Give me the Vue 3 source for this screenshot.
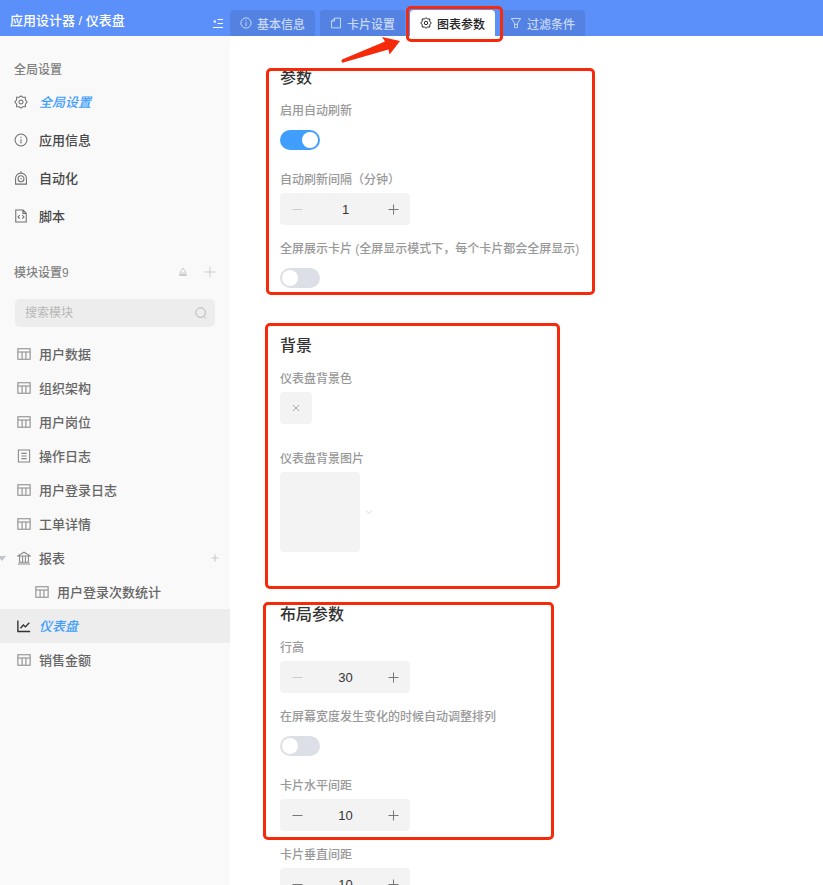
<!-- DashboardDesigner.vue -->
<script setup>
import { ref, reactive } from "vue";

const tabs = [
  { key: "base", label: "基本信息", icon: "info" },
  { key: "card", label: "卡片设置", icon: "card" },
  { key: "chart", label: "图表参数", icon: "gear" },
  { key: "filter", label: "过滤条件", icon: "filter" },
];
const activeTab = ref("chart");

const globalItems = [
  { label: "全局设置", icon: "gear", active: true },
  { label: "应用信息", icon: "info" },
  { label: "自动化", icon: "robot" },
  { label: "脚本", icon: "script" },
];

const modules = [
  { label: "用户数据", icon: "table" },
  { label: "组织架构", icon: "table" },
  { label: "用户岗位", icon: "table" },
  { label: "操作日志", icon: "log" },
  { label: "用户登录日志", icon: "table" },
  { label: "工单详情", icon: "table" },
  { label: "报表", icon: "bank", group: true },
  { label: "用户登录次数统计", icon: "table", child: true },
  { label: "仪表盘", icon: "chart", active: true },
  { label: "销售金额", icon: "table" },
];

// stroke paths, 16 x 16 grid
const icons = {
  info: "M8 1.2a6.8 6.8 0 1 0 0 13.6a6.8 6.8 0 1 0 0-13.6zM8 7v5M8 4.2v1.4",
  gear: "M8 1l2 1.6h3v3L15 8l-2 2.4v3h-3L8 15l-2-1.6H3v-3L1 8l2-2.4v-3h3zM8 5.7a2.3 2.3 0 1 0 0 4.6a2.3 2.3 0 1 0 0-4.6z",
  card: "M6 1.5h8v13H2v-9zM6 1.5v4H2",
  filter: "M1.8 2h12.4L10 8.2v6H6v-6zM6 9.8h4",
  robot: "M1.8 15V8.6a6.2 6.2 0 0 1 12.4 0V15zM8 2.4V.2M8 5.4a3.4 3.4 0 1 0 0 6.8a3.4 3.4 0 1 0 0-6.8zM8 8v1.6",
  script: "M2 1.2h8.4L14 4.8v10H2zM10.2 1.2V5H14M6.6 7l-2 2 2 2M9.4 7l2 2-2 2",
  table: "M1 2h14v12H1zM1 5.6h14M5.8 5.6V14M10.2 5.6V14",
  log: "M1.6 1.2h12.8v13.6H1.6zM5 5h6M5 8h6M5 11h6",
  bank: "M1 5.6l7-4.2 7 4.2zM1 14.8h14M2 12.8h12M3 5.6v7M6.4 5.6v7M9.6 5.6v7M13 5.6v7",
  chart: "M1 1.6v12.6h14M4 10.6l3.2-3.8 2.4 2.2L14 4.2",
};

const form = reactive({
  autoRefresh: true,
  interval: 1,
  fullscreen: false,
  rowHeight: 30,
  responsive: false,
  gapX: 10,
  gapY: 10,
});

const sections = [
  {
    title: "参数",
    mark: "mark-params",
    fields: [
      { key: "autoRefresh", label: "启用自动刷新", type: "switch" },
      { key: "interval", label: "自动刷新间隔（分钟）", type: "number", min: 1 },
      {
        key: "fullscreen",
        label: "全屏展示卡片 (全屏显示模式下，每个卡片都会全屏显示)",
        type: "switch",
      },
    ],
  },
  {
    title: "背景",
    mark: "mark-background",
    loose: true,
    fields: [
      { key: "bgColor", label: "仪表盘背景色", type: "color" },
      { key: "bgImage", label: "仪表盘背景图片", type: "image" },
    ],
  },
  {
    title: "布局参数",
    mark: "mark-layout",
    fields: [
      { key: "rowHeight", label: "行高", type: "number", min: 30 },
      { key: "responsive", label: "在屏幕宽度发生变化的时候自动调整排列", type: "switch" },
      { key: "gapX", label: "卡片水平间距", type: "number", min: 0 },
      { key: "gapY", label: "卡片垂直间距", type: "number", min: 0 },
    ],
  },
];

function step(field, delta) {
  form[field.key] = Math.max(field.min, Number(form[field.key]) + delta);
}
</script>

<template>
  <div class="designer">
    <header class="topbar">
      <div class="brand">
        <span>应用设计器 / 仪表盘</span>
        <button class="icon-btn" type="button" aria-label="收起">
          <svg width="12" height="12" viewBox="0 0 12 12">
            <path d="M5.5 2.5H11M5.5 6.5H11M1 10.5h10" />
            <path class="solid" d="M1 4.5l2.6-1.8v3.6z" />
          </svg>
        </button>
      </div>
      <nav class="tabs">
        <div v-for="tab in tabs" :key="tab.key" class="tab-wrap">
          <button
            type="button"
            class="tab"
            :class="{ active: tab.key === activeTab }"
            @click="activeTab = tab.key"
          >
            <svg width="12" height="12" viewBox="0 0 16 16"><path :d="icons[tab.icon]" /></svg>
            <span>{{ tab.label }}</span>
          </button>
          <template v-if="tab.key === 'chart'">
            <span class="mark mark-tab"></span>
            <svg class="arrow" width="62" height="30" viewBox="0 0 62 30">
              <path d="M60 5L42 1l3 4.6-43 18q-1.4 1.8 .4 3.2l46-13.4 1.2 5z" />
            </svg>
          </template>
        </div>
      </nav>
    </header>

    <div class="body">
      <aside class="sidebar">
        <div class="side-title global-title"><span>全局设置</span></div>
        <nav>
          <a
            v-for="item in globalItems"
            :key="item.label"
            href="#"
            class="global-item"
            :class="{ active: item.active }"
          >
            <svg width="14" height="14" viewBox="0 0 16 16"><path :d="icons[item.icon]" /></svg>
            <span>{{ item.label }}</span>
          </a>
        </nav>

        <div class="side-title module-title">
          <span>模块设置9</span>
          <button class="icon-btn" type="button" aria-label="收起全部">
            <svg width="8" height="10" viewBox="0 0 8 10">
              <path d="M4 1L.8 6h6.4z" />
              <path class="solid" d="M.2 7h7.6v2H.2z" />
            </svg>
          </button>
          <button class="icon-btn" type="button" aria-label="新增模块">
            <svg width="12" height="12" viewBox="0 0 12 12"><path d="M6 .5v11M.5 6h11" /></svg>
          </button>
        </div>

        <label class="search">
          <input type="text" placeholder="搜索模块" aria-label="搜索模块" />
          <svg width="12" height="12" viewBox="0 0 12 12">
            <circle cx="5.6" cy="5.6" r="4.8" />
            <path d="M9 9.4l2 2" />
          </svg>
        </label>

        <nav>
          <a
            v-for="item in modules"
            :key="item.label"
            href="#"
            class="module-item"
            :class="{ active: item.active, child: item.child }"
          >
            <i v-if="item.group" class="caret"></i>
            <svg width="14" height="14" viewBox="0 0 16 16"><path :d="icons[item.icon]" /></svg>
            <span>{{ item.label }}</span>
            <svg v-if="item.group" class="add" width="8" height="8" viewBox="0 0 8 8">
              <path d="M4 .5v7M.5 4h7" />
            </svg>
          </a>
        </nav>
      </aside>

      <main class="content">
        <section
          v-for="section in sections"
          :key="section.title"
          class="section"
          :class="{ loose: section.loose }"
        >
          <h2>{{ section.title }}</h2>
          <div v-for="field in section.fields" :key="field.key" class="field">
            <label :for="field.key">{{ field.label }}</label>

            <div v-if="field.type === 'switch'" class="control">
              <input :id="field.key" v-model="form[field.key]" class="switch" type="checkbox" />
            </div>

            <div v-else-if="field.type === 'number'" class="stepper">
              <button
                type="button"
                aria-label="减少"
                :disabled="form[field.key] <= field.min"
                @click="step(field, -1)"
              >
                <svg width="11" height="11" viewBox="0 0 11 11"><path d="M.5 5.5h10" /></svg>
              </button>
              <input :id="field.key" v-model="form[field.key]" type="text" />
              <button type="button" aria-label="增加" @click="step(field, 1)">
                <svg width="11" height="11" viewBox="0 0 11 11">
                  <path d="M.5 5.5h10M5.5 .5v10" />
                </svg>
              </button>
            </div>

            <button v-else-if="field.type === 'color'" :id="field.key" class="color" type="button">
              <svg width="8" height="8" viewBox="0 0 8 8"><path d="M1 1l6 6M7 1L1 7" /></svg>
            </button>

            <div v-else class="picker">
              <button :id="field.key" class="thumb" type="button"></button>
              <svg width="8" height="8" viewBox="0 0 8 8"><path d="M1 2.5l3 3 3-3" /></svg>
            </div>
          </div>
          <span class="mark" :class="section.mark"></span>
        </section>
      </main>
    </div>
  </div>
</template>

<style>
body {
  margin: 0;
  background: #ffffff;
}
</style>

<style scoped>
.designer {
  display: flex;
  flex-direction: column;
  height: 100vh;
  overflow: hidden;
  font-family: "Liberation Sans", "Noto Sans CJK SC", sans-serif;
  font-size: 13px;
  color: #333333;
}

.designer * {
  box-sizing: border-box;
}

button,
input {
  margin: 0;
  padding: 0;
  border: none;
  background: none;
  font: inherit;
  color: inherit;
  outline: none;
}

button {
  display: flex;
  align-items: center;
  justify-content: center;
  cursor: pointer;
}

a {
  color: inherit;
  text-decoration: none;
}

svg {
  flex: none;
  fill: none;
  stroke: currentColor;
  stroke-width: 1;
}

.solid {
  fill: currentColor;
  stroke: none;
}

/* ===== TOP BAR ===== */
.topbar {
  position: relative;
  z-index: 1;
  display: flex;
  flex: none;
  height: 36px;
  background: #5b8ffa;
}

.brand {
  display: flex;
  align-items: center;
  justify-content: space-between;
  width: 230px;
  padding: 4px 6px 0 10px;
  font-weight: 500;
  color: #ffffff;
}

.brand .icon-btn {
  padding-top: 6px;
}

.tabs {
  display: flex;
  align-items: flex-end;
  gap: 5px;
}

.tab-wrap {
  position: relative;
}

.tab {
  gap: 5px;
  height: 26px;
  padding: 0 10px;
  border-radius: 4px 4px 0 0;
  background: #5382e2;
  font-size: 12px;
  font-weight: 500;
  color: #c9d8f7;
}

.tab svg {
  stroke-width: 1.3;
}

.tab.active {
  background: #ffffff;
  color: #222222;
}

.brand span,
.sidebar span {
  padding-bottom: 2px;
}

/* ===== SIDEBAR ===== */
.body {
  display: flex;
  flex: 1;
  min-height: 0;
}

.sidebar {
  flex: none;
  width: 230px;
  padding-top: 21px;
  background: #f9f9f9;
}

.side-title {
  display: flex;
  align-items: center;
  height: 24px;
  padding: 0 14px;
  font-size: 12px;
  font-weight: 500;
  color: #808080;
}

.global-title {
  margin-bottom: 2px;
}

.module-title {
  gap: 17px;
  margin: 25px 0 15px;
}

.module-title span {
  margin-right: auto;
}

.module-title .icon-btn {
  color: #cccccc;
}

.global-item {
  display: flex;
  align-items: center;
  gap: 11px;
  height: 38px;
  padding-left: 14px;
  font-weight: 500;
  color: #484848;
}

.global-item svg {
  color: #707070;
  stroke-width: 1.2;
}

.active span {
  font-style: italic;
  color: #409eff;
}

.tab.active span {
  font-style: normal;
  color: #222222;
}

.search {
  display: flex;
  align-items: center;
  height: 28px;
  margin: 0 15px 10px;
  padding: 0 8px 0 10px;
  border-radius: 5px;
  background: #ededed;
  font-size: 12px;
  color: #b4b4b4;
}

.search input {
  flex: 1;
  min-width: 0;
}

.search input::placeholder {
  color: #b8b8b8;
  opacity: 1;
}

.module-item {
  position: relative;
  display: flex;
  align-items: center;
  gap: 8px;
  height: 34px;
  padding: 0 11px 0 17px;
  font-weight: 500;
  color: #666666;
}

.module-item svg {
  color: #888888;
  stroke-width: 1.2;
}

.module-item.child {
  padding-left: 35px;
}

.module-item.active {
  background: #ededed;
}

.module-item.active svg {
  color: #333333;
  stroke-width: 1.6;
}

.module-item .add {
  margin-left: auto;
  color: #cccccc;
}

.caret {
  position: absolute;
  left: -2px;
  border: 4px solid transparent;
  border-top: 5px solid #c0c4cc;
  border-bottom: none;
}

/* ===== SETTINGS ===== */
.content {
  flex: 1;
  min-width: 0;
  padding: 30px 50px 0;
}

.section {
  position: relative;
  margin-bottom: 28px;
}

h2 {
  margin: 0 0 9px;
  font-size: 16px;
  font-weight: 500;
  line-height: 24px;
}

.field {
  padding-bottom: 12px;
}

.loose .field {
  padding-bottom: 23px;
}

.field label {
  display: block;
  margin-bottom: 1px;
  font-size: 12px;
  font-weight: 500;
  line-height: 24px;
  color: #999999;
}

.control {
  display: flex;
  align-items: center;
  height: 32px;
}

.switch {
  display: flex;
  align-items: center;
  width: 40px;
  height: 20px;
  padding: 0 2px;
  border-radius: 10px;
  background: #dcdfe6;
  appearance: none;
  cursor: pointer;
}

.switch::before {
  content: "";
  width: 16px;
  height: 16px;
  border-radius: 50%;
  background: #ffffff;
}

.switch:checked {
  justify-content: flex-end;
  background: #409eff;
}

.stepper {
  display: flex;
  width: 130px;
  height: 32px;
  border-radius: 4px;
  background: #f3f3f3;
}

.stepper button {
  width: 34px;
  color: #777777;
}

.stepper button:first-child {
  width: 35px;
}

.stepper button:disabled {
  color: #cccccc;
}

.stepper input {
  flex: 1;
  min-width: 0;
  text-align: center;
}

.color {
  width: 32px;
  height: 32px;
  border-radius: 4px;
  background: #f3f3f3;
  color: #aaaaaa;
}

.picker {
  display: flex;
  align-items: center;
  gap: 5px;
  color: #d8d8d8;
}

.thumb {
  width: 80px;
  height: 80px;
  border-radius: 4px;
  background: #f3f3f3;
}

/* ===== HIGHLIGHTS ===== */
.mark {
  position: absolute;
  border: 3px solid #f52a0b;
  border-radius: 5px;
  pointer-events: none;
}

.mark-tab {
  z-index: 1;
  top: -4px;
  left: -4px;
  width: 97px;
  height: 36px;
}

.mark-params {
  top: 2px;
  left: -14px;
  width: 329px;
  height: 227px;
}

.mark-background {
  top: -11px;
  left: -15px;
  width: 295px;
  height: 266px;
}

.mark-layout {
  top: -1px;
  left: -17px;
  width: 291px;
  height: 238px;
}

.arrow {
  position: absolute;
  top: 26px;
  left: -70px;
  fill: #f52a0b;
  stroke: none;
  pointer-events: none;
}
</style>
